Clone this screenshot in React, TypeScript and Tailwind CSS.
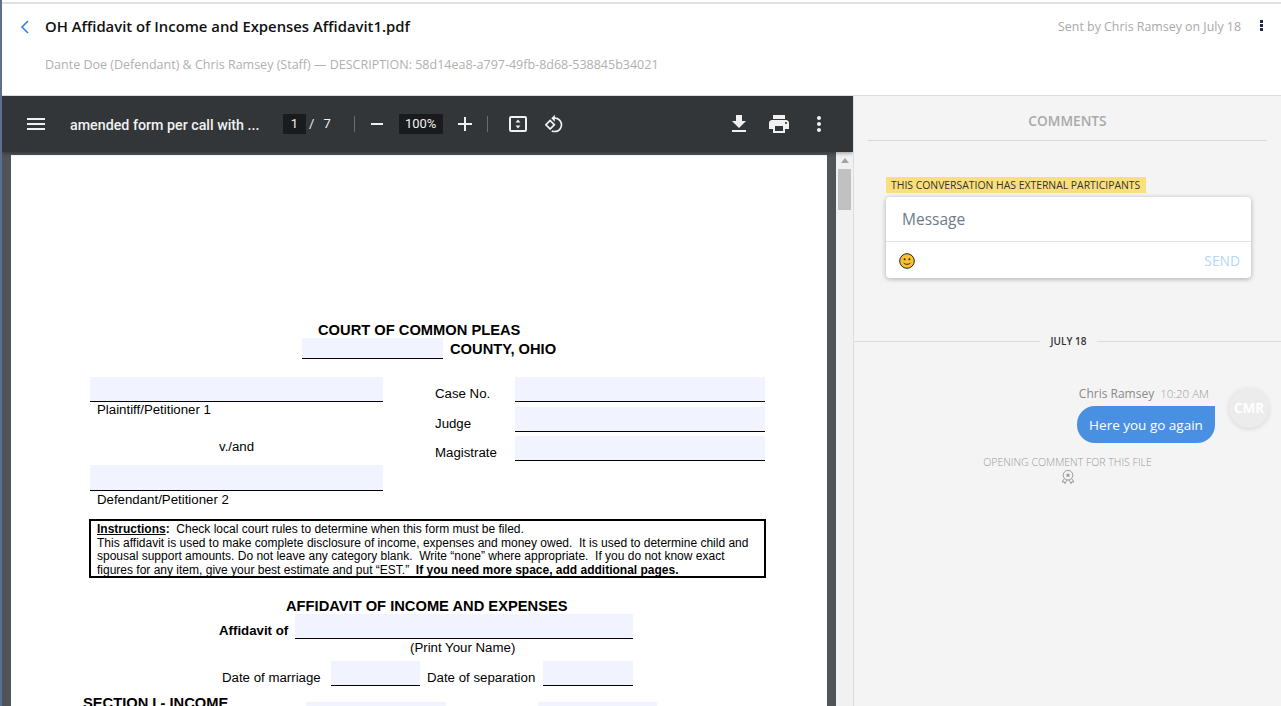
const FIELD = "bg-[#f1f4ff] border-b border-black";

function ToolIcon({ d, className }: { d: string; className: string }) {
  return (
    <svg viewBox="0 0 24 24" fill="#f1f1f1" className={className}>
      <path d={d} />
    </svg>
  );
}

function Header() {
  return (
    <header className="mt-[2px] box-content h-[91px] shrink-0 border-t-2 border-b border-[#e0e0e0] border-b-[#dddddd] bg-white font-['Open_Sans',sans-serif]">
      <div className="box-content flex h-[35px] items-center pt-[5px]">
        <svg viewBox="0 0 12 14" fill="none" stroke="#2f80ed" strokeWidth="1.6" className="ml-[17px] h-[14px] w-[12px]">
          <path d="M9 1 3 7l6 6" />
        </svg>
        <h1 className="ml-[14px] text-[14.85px] font-semibold whitespace-nowrap text-[#111]">
          OH Affidavit of Income and Expenses Affidavit1.pdf
        </h1>
        <span className="mt-[1px] ml-auto text-[12.4px] whitespace-nowrap text-[#a9a9a9]">Sent by Chris Ramsey on July 18</span>
        <div className="mr-[18px] mb-[3px] ml-[19px] flex flex-col gap-[1px]">
          <span className="h-[3px] w-[3px] bg-[#1d2c4c]" />
          <span className="h-[3px] w-[3px] bg-[#1d2c4c]" />
          <span className="h-[3px] w-[3px] bg-[#1d2c4c]" />
        </div>
      </div>
      <p className="mt-[12px] ml-[43px] text-[12.5px] whitespace-nowrap text-[#b0b0b0]">
        Dante Doe (Defendant) &amp; Chris Ramsey (Staff) — DESCRIPTION: 58d14ea8-a797-49fb-8d68-538845b34021
      </p>
    </header>
  );
}

function Toolbar() {
  return (
    <div className="relative z-10 flex h-[56px] shrink-0 items-center bg-[#323639] font-['Roboto',sans-serif] text-[#f1f1f1] shadow-[0_1px_4px_rgba(0,0,0,0.4)]">
      <ToolIcon className="ml-[22px] h-6 w-6" d="M3 18h18v-2H3v2zm0-5h18v-2H3v2zm0-7v2h18V6H3z" />
      <span className="ml-[22px] w-[196px] pt-[3px] text-[14.25px] font-medium whitespace-nowrap">amended form per call with ...</span>
      <span className="ml-[17px] flex h-[20px] w-[23px] items-center justify-center bg-[#191b1c] text-[13px]">1</span>
      <span className="ml-[3px] text-[13px]">/</span>
      <span className="ml-[9px] text-[13px]">7</span>
      <span className="ml-[23px] h-[16px] w-px bg-[#6a6d70]" />
      <ToolIcon className="ml-[10px] h-6 w-6" d="M6 11h12v2H6z" />
      <span className="ml-[10px] flex h-[20px] w-[44px] items-center justify-center bg-[#191b1c] text-[13px]">100%</span>
      <ToolIcon className="ml-[10px] h-6 w-6" d="M19 13h-6v6h-2v-6H5v-2h6V5h2v6h6v2z" />
      <span className="ml-[10px] h-[16px] w-px bg-[#6a6d70]" />
      <svg viewBox="0 0 24 24" fill="none" className="ml-[18px] h-6 w-6">
        <rect x="4" y="5" width="16" height="14" rx="1" stroke="#f1f1f1" strokeWidth="2" />
        <path d="M12 7.5 14.5 10.5h-5zM12 16.5 9.5 13.5h5z" fill="#f1f1f1" />
      </svg>
      <ToolIcon
        className="ml-[14px] h-5 w-5"
        d="M7.34 6.41L.86 12.9l6.49 6.48 6.49-6.48-6.5-6.49zM3.69 12.9l3.66-3.66L11 12.9l-3.66 3.66-3.65-3.66zm15.67-6.26C17.61 4.88 15.3 4 13 4V.76L8.76 5 13 9.24V6c1.79 0 3.58.68 4.95 2.05 2.73 2.73 2.73 7.17 0 9.9C16.58 19.32 14.79 20 13 20c-.97 0-1.94-.21-2.84-.61l-1.49 1.49C10.02 21.62 11.51 22 13 22c2.3 0 4.61-.88 6.36-2.64 3.52-3.51 3.52-9.21 0-12.72z"
      />
      <ToolIcon className="ml-auto h-6 w-6" d="M19 9h-4V3H9v6H5l7 7 7-7zM5 18v2h14v-2H5z" />
      <ToolIcon
        className="ml-[16px] h-6 w-6"
        d="M19 8H5c-1.66 0-3 1.34-3 3v6h4v4h12v-4h4v-6c0-1.66-1.34-3-3-3zm-3 11H8v-5h8v5zm3-7c-.55 0-1-.45-1-1s.45-1 1-1 1 .45 1 1-.45 1-1 1zm-1-9H6v4h12V3z"
      />
      <ToolIcon
        className="mr-[22px] ml-[16px] h-6 w-6"
        d="M12 8c1.1 0 2-.9 2-2s-.9-2-2-2-2 .9-2 2 .9 2 2 2zm0 2c-1.1 0-2 .9-2 2s.9 2 2 2 2-.9 2-2-.9-2-2-2zm0 6c-1.1 0-2 .9-2 2s.9 2 2 2 2-.9 2-2-.9-2-2-2z"
      />
    </div>
  );
}

function CaseRow({ label, className }: { label: string; className: string }) {
  return (
    <div className={`flex h-[25px] ${className}`}>
      <span className="w-[80px] pt-[9px] leading-[15px]">{label}</span>
      <div className={`h-[25px] w-[250px] ${FIELD}`} />
    </div>
  );
}

function PdfPage() {
  return (
    <div className="h-[551px] w-[816px] shrink-0 overflow-hidden bg-white pt-[167px] pl-[79px] font-['Liberation_Sans',sans-serif] text-[13.25px] text-black">
      <div className="ml-[228px] text-[14.7px] leading-[16px] font-bold">COURT OF COMMON PLEAS</div>
      <div className="ml-[212px] flex h-[21px]">
        <div className={`h-[21px] w-[141px] ${FIELD}`} />
        <span className="ml-[7px] pt-[1px] text-[14.7px] leading-[21px] font-bold">COUNTY, OHIO</span>
      </div>

      <div className="mt-[18px] flex">
        <div className="w-[293px]">
          <div className={`h-[25px] ${FIELD}`} />
          <div className="ml-[7px] leading-[15px]">Plaintiff/Petitioner 1</div>
          <div className="mt-[22px] ml-[129px] leading-[15px]">v./and</div>
          <div className={`mt-[11px] h-[26px] ${FIELD}`} />
          <div className="mt-[1px] ml-[7px] leading-[15px]">Defendant/Petitioner 2</div>
        </div>
        <div className="ml-[52px]">
          <CaseRow label="Case No." className="" />
          <CaseRow label="Judge" className="mt-[5px]" />
          <CaseRow label="Magistrate" className="mt-[4px]" />
        </div>
      </div>

      <div className="mt-[12px] -ml-px h-[59px] w-[677px] border-2 border-black pt-[2px] pl-[6px] text-[12px] leading-[13.7px] whitespace-pre">
        <div>
          <b>
            <u>Instructions</u>:
          </b>
          {"  Check local court rules to determine when this form must be filed."}
        </div>
        <div>This affidavit is used to make complete disclosure of income, expenses and money owed.  It is used to determine child and</div>
        <div>spousal support amounts. Do not leave any category blank.  Write “none” where appropriate.  If you do not know exact</div>
        <div>
          {"figures for any item, give your best estimate and put “EST.”  "}
          <b>If you need more space, add additional pages.</b>
        </div>
      </div>

      <div className="mt-[20px] ml-[196px] text-[14.7px] leading-[16px] font-bold">AFFIDAVIT OF INCOME AND EXPENSES</div>
      <div className="ml-[129px] flex h-[25px]">
        <b className="w-[76px] pt-[8px] leading-[17px]">Affidavit of</b>
        <div className={`h-[25px] w-[338px] ${FIELD}`} />
      </div>
      <div className="mt-[1px] ml-[320px] leading-[15px]">(Print Your Name)</div>
      <div className="mt-[6px] ml-[132px] flex h-[25px]">
        <span className="w-[109px] pt-[8px] leading-[17px]">Date of marriage</span>
        <div className={`h-[25px] w-[89px] ${FIELD}`} />
        <span className="ml-[7px] w-[116px] pt-[8px] leading-[17px]">Date of separation</span>
        <div className={`h-[25px] w-[90px] ${FIELD}`} />
      </div>
      <div className="mt-[9px] -ml-[7px] flex h-[20px]">
        <b className="w-[223px] text-[14.7px] leading-[16px]">SECTION I - INCOME</b>
        <div className="mt-[7px] h-[13px] w-[140px] bg-[#f1f4ff]" />
        <div className="mt-[7px] ml-[92px] h-[13px] w-[119px] bg-[#f1f4ff]" />
      </div>
    </div>
  );
}

function Viewer() {
  return (
    <section className="flex w-[851px] shrink-0 flex-col overflow-hidden">
      <Toolbar />
      <div className="flex flex-1 bg-[#4f5457]">
        <div className="flex flex-1 pt-[3px] pl-[9px]">
          <PdfPage />
        </div>
        <div className="flex w-[17px] flex-col items-center bg-[#f1f1f1] pt-[6px]">
          <div className="h-0 w-0 border-x-[4px] border-b-[5px] border-x-transparent border-b-[#a3a3a3]" />
          <div className="mt-[6px] h-[41px] w-[13px] bg-[#c1c1c1]" />
        </div>
      </div>
    </section>
  );
}

function Smiley() {
  return (
    <svg viewBox="0 0 16 16" className="h-[16px] w-[16px]">
      <circle cx="8" cy="8" r="7.3" fill="#fbc02d" stroke="#222" strokeWidth="1" />
      <circle cx="5.6" cy="6.2" r="1" fill="#222" />
      <circle cx="10.4" cy="6.2" r="1" fill="#222" />
      <path d="M4.5 9.8c1 2 6 2 7 0" fill="none" stroke="#222" strokeWidth="0.9" />
    </svg>
  );
}

function Ribbon() {
  return (
    <svg viewBox="0 0 16 16" fill="none" stroke="#9b9b9b" strokeWidth="1" className="h-[16px] w-[16px]">
      <circle cx="8" cy="6.2" r="4.8" />
      <path d="M8 3.8l.8 1.6 1.6.2-1.2 1.1.3 1.6L8 7.5l-1.5.8.3-1.6-1.2-1.1 1.6-.2z" fill="#9b9b9b" stroke="none" />
      <path d="M4.4 9.6 2 13l2.2-.2.8 1.8 2-3.6M11.6 9.6 14 13l-2.2-.2-.8 1.8-2-3.6" />
    </svg>
  );
}

function Sidebar() {
  return (
    <aside className="flex flex-1 flex-col border-l border-[#dddddd] bg-[#f4f4f4] font-['Open_Sans',sans-serif]">
      <div className="mx-[14px] h-[45px] border-b border-[#d8d8d8] pt-[15px] text-center text-[13.7px] leading-[20px] font-semibold text-[#a9a9a9]">
        COMMENTS
      </div>
      <div className="mt-[36px] ml-[32px] w-[365px]">
        <div className="h-[16px] w-[260px] bg-[#fbdf7d] pl-[5px] text-[10.4px] leading-[16px] whitespace-nowrap text-[#333]">
          THIS CONVERSATION HAS EXTERNAL PARTICIPANTS
        </div>
        <div className="mt-[4px] rounded bg-white shadow-[0_1px_5px_rgba(0,0,0,0.3)]">
          <div className="h-[45px] border-b border-[#e2e2e2] pl-[16px] text-[15.5px] leading-[45px] text-[#6f7b8a]">Message</div>
          <div className="flex h-[36px] items-center justify-between pt-[2px] pr-[11px] pl-[13px]">
            <Smiley />
            <span className="text-[13.8px] text-[#b0d8fb]">SEND</span>
          </div>
        </div>
      </div>

      <div className="mt-[54px] flex h-[18px] items-center">
        <span className="h-px flex-1 bg-[#dcdcdc]" />
        <span className="w-[57px] text-center text-[10px] font-semibold text-[#333]">JULY 18</span>
        <span className="h-px w-[184px] bg-[#dcdcdc]" />
      </div>

      <div className="mt-[36px] flex justify-end pr-[12px]">
        <div className="mt-[-1px] flex flex-col items-end">
          <div className="flex h-[21px] items-baseline pr-[6px] whitespace-nowrap">
            <span className="text-[12px] text-[#8a8a8a]">Chris Ramsey</span>
            <span className="ml-[6px] text-[11.5px] font-light text-[#9a9a9a]">10:20 AM</span>
          </div>
          <div className="h-[37px] w-[138px] rounded-[18px] rounded-tr-none bg-[#4a90e2] text-center text-[13.5px] leading-[38px] text-white">
            Here you go again
          </div>
        </div>
        <div className="mt-[2px] ml-[14px] flex h-[40px] w-[40px] items-center justify-center rounded-full bg-[#ececec] text-[13.5px] font-bold text-white shadow-[0_1px_5px_rgba(0,0,0,0.12)]">
          CMR
        </div>
      </div>

      <div className="mt-[12px] flex flex-col items-center">
        <span className="text-[10.55px] leading-[14px] font-light text-[#9a9a9a]">OPENING COMMENT FOR THIS FILE</span>
        <Ribbon />
      </div>
    </aside>
  );
}

export default function App() {
  return (
    <div className="flex h-[706px] w-[1281px] overflow-hidden bg-white">
      <div className="w-[2px] shrink-0 bg-[#5b6f94]" />
      <div className="flex min-w-0 flex-1 flex-col">
        <Header />
        <div className="flex min-h-0 flex-1">
          <Viewer />
          <Sidebar />
        </div>
      </div>
    </div>
  );
}
